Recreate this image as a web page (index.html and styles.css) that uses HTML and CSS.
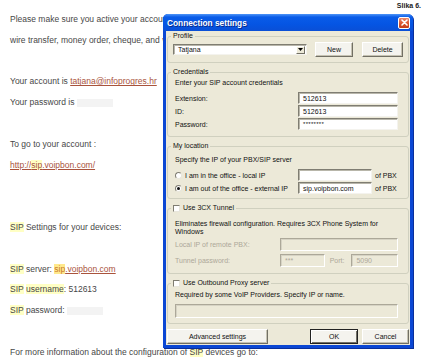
FILE: index.html
```html
<!DOCTYPE html>
<html lang="en">
<head>
    <meta charset="UTF-8">
    <meta name="viewport" content="width=device-width, initial-scale=1.0">
    <title>Slika 6 - Connection settings</title>
    <link rel="stylesheet" href="styles.css">
</head>
<body>
    <div class="page">
        <!-- Oznaka slike -->
        <div class="caption">Slika 6.</div>

        <!-- Tekst poruke u pozadini -->
        <div class="mail">
            <p class="line">Please make sure you active your account by making a payment via credit card,</p>
            <p class="line">wire transfer, money order, cheque, and various other payment methods.</p>
            <p class="line gap">Your account is <a class="link" href="#">tatjana@infoprogres.hr</a></p>
            <p class="line">Your password is <span class="blank"></span></p>
            <p class="line gap">To go to your account :</p>
            <p class="line"><a class="link" href="#">http://<span class="hl">sip</span>.voipbon.com/</a></p>
            <p class="line gap2"><span class="hl">SIP</span> Settings for your devices:</p>
            <p class="line gap"><span class="hl">SIP</span> server: <span class="hl-strong">sip</span><a class="link" href="#">.voipbon.com</a></p>
            <p class="line"><span class="hl">SIP</span> <span class="hl">username</span>: 512613</p>
            <p class="line"><span class="hl">SIP</span> password: <span class="blank"></span></p>
            <p class="line gap">For more information about the configuration of <span class="hl">SIP</span> devices go to:</p>
        </div>

        <!-- Prozor s postavkama veze -->
        <div class="window">
            <div class="titlebar">
                <span class="title">Connection settings</span>
                <span class="close">
                    <svg width="7" height="7" viewBox="0 0 7 7"><path d="M1 1 L6 6 M6 1 L1 6" stroke="#fff" stroke-width="1.6" stroke-linecap="round"/></svg>
                </span>
            </div>

            <div class="window-body">
                <fieldset class="group group-profile">
                    <legend>Profile</legend>
                    <div class="profile-row">
                        <div class="select">
                            <span>Tatjana</span>
                            <span class="drop">
                                <svg width="5" height="3" viewBox="0 0 5 3"><path d="M0 0 H5 L2.5 3 Z" fill="#000"/></svg>
                            </span>
                        </div>
                        <button class="btn btn-new" type="button">New</button>
                        <button class="btn btn-delete" type="button">Delete</button>
                    </div>
                </fieldset>

                <fieldset class="group group-cred">
                    <legend>Credentials</legend>
                    <p class="desc">Enter your SIP account credentials</p>
                    <div class="field-row first">
                        <span class="field-label">Extension:</span>
                        <span class="input w100">512613</span>
                    </div>
                    <div class="field-row">
                        <span class="field-label">ID:</span>
                        <span class="input w100">512613</span>
                    </div>
                    <div class="field-row">
                        <span class="field-label">Password:</span>
                        <span class="input w100 pwd">********</span>
                    </div>
                </fieldset>

                <fieldset class="group group-loc">
                    <legend>My location</legend>
                    <p class="desc">Specify the IP of your PBX/SIP server</p>
                    <div class="field-row first">
                        <span class="field-label"><span class="radio"></span>I am in the office - local IP</span>
                        <span class="input w74"></span>
                        <span class="suffix">of PBX</span>
                    </div>
                    <div class="field-row">
                        <span class="field-label"><span class="radio checked"></span>I am out of the office - external IP</span>
                        <span class="input w74">sip.voipbon.com</span>
                        <span class="suffix">of PBX</span>
                    </div>
                </fieldset>

                <fieldset class="group group-tunnel">
                    <legend><span class="check"></span>Use 3CX Tunnel</legend>
                    <p class="desc two">Eliminates firewall configuration. Requires 3CX Phone System for Windows</p>
                    <div class="field-row tall first">
                        <span class="field-label fixed disabled">Local IP of remote PBX:</span>
                        <span class="input off w119"></span>
                    </div>
                    <div class="field-row spaced">
                        <span class="field-label fixed disabled">Tunnel password:</span>
                        <span class="input off w45">***</span>
                        <span class="port disabled">Port:</span>
                        <span class="input off w47">5090</span>
                    </div>
                </fieldset>

                <fieldset class="group group-proxy">
                    <legend><span class="check"></span>Use Outbound Proxy server</legend>
                    <p class="desc">Required by some VoIP Providers. Specify IP or name.</p>
                    <span class="input off wide"></span>
                </fieldset>

                <div class="actions">
                    <button class="btn btn-adv" type="button">Advanced settings</button>
                    <button class="btn btn-ok" type="button">OK</button>
                    <button class="btn btn-cancel" type="button">Cancel</button>
                </div>
            </div>
        </div>
    </div>
</body>
</html>
```

FILE: styles.css
```css
/* Osnovno */
body {
    margin: 0;
    background: #fff;
    font-family: "Liberation Sans", Arial, sans-serif;
}

.page {
    position: relative;
    width: 425px;
    height: 364px;
    overflow: hidden;
}

.caption {
    position: absolute;
    top: 2px;
    right: 4px;
    font-size: 7px;
    font-weight: bold;
    color: #222;
}

/* Tekst poruke */
.mail {
    padding: 9px 0 0 10px;
    color: #474747;
    font-size: 8.5px;
}

.line {
    margin: 0;
    line-height: 20.8px;
    white-space: nowrap;
}

.line.gap {
    margin-top: 20.8px;
}

.line.gap2 {
    margin-top: 41.6px;
}

.link {
    color: #a9533c;
    text-decoration: underline;
}

.hl {
    background: #ffffc4;
}

.hl-strong {
    background: #ffe98c;
    color: #c87a2c;
}

.blank {
    display: inline-block;
    width: 36px;
    height: 8px;
    vertical-align: middle;
    background: #f3f3f3;
}

/* Prozor */
.window {
    position: absolute;
    left: 163px;
    top: 14px;
    width: 250px;
    box-sizing: border-box;
    background: #0b47d4;
    border-radius: 5px 5px 0 0;
    box-shadow: 1px 1px 0 #0a2f9a;
}

.titlebar {
    height: 17px;
    display: flex;
    align-items: center;
    justify-content: space-between;
    padding: 0 3px 0 4px;
    border-radius: 5px 5px 0 0;
    background: linear-gradient(to bottom, #4f95f7 0%, #0a5ce8 18%, #0555e3 60%, #0a4fd6 100%);
}

.title {
    color: #fff;
    font-size: 8.3px;
    font-weight: bold;
    text-shadow: 1px 1px 0 #0a2a8a;
}

.close {
    display: flex;
    align-items: center;
    justify-content: center;
    width: 10px;
    height: 10px;
    border: 1px solid #fff;
    border-radius: 2px;
    background: linear-gradient(to bottom, #ec8a6c, #d9502a 60%, #c23c18);
}

.window-body {
    margin: 0 3px 3px;
    padding: 1px 1px 1px;
    background: #ece9d8;
    color: #111;
    font-size: 7px;
}

/* Grupe */
.group {
    margin: 0 0 5px;
    padding: 2px 10px 5px 7px;
    border: 1px solid #d0d0bf;
    border-radius: 3px;
    min-width: 0;
}

.group legend {
    padding: 0 2px;
    margin-left: -4px;
    line-height: 8px;
    display: flex;
    align-items: center;
}

.group-profile {
    padding: 2px 5px 5px 5px;
}

.group-profile legend {
    margin-left: -2px;
}

.group-cred {
    padding-bottom: 6px;
}

.group-loc {
    padding-bottom: 4px;
}

.group-tunnel {
    padding-bottom: 6px;
}

.desc {
    margin: 0;
    line-height: 9px;
    white-space: nowrap;
}

.group-loc .desc {
    margin-top: 3px;
}

.desc.two {
    margin-top: 6px;
    line-height: 8px;
    white-space: normal;
}

.group-proxy .desc {
    margin-top: 2px;
    line-height: 8px;
}

.profile-row {
    display: flex;
    align-items: center;
}

.select {
    width: 134px;
    height: 11px;
    box-sizing: border-box;
    display: flex;
    align-items: center;
    justify-content: space-between;
    padding: 0 1px 0 4px;
    background: #fff;
    border: 1px solid;
    border-color: #7f7d72 #f4f3ee #f4f3ee #7f7d72;
    box-shadow: inset 1px 1px 0 #b8b6aa;
}

.drop {
    display: flex;
    align-items: center;
    justify-content: center;
    width: 9px;
    height: 8px;
    background: #ece9d8;
    border: 1px solid;
    border-color: #fff #716f64 #716f64 #fff;
    box-sizing: border-box;
}

/* Dugmad */
.btn {
    height: 15px;
    padding: 0;
    font-family: inherit;
    font-size: 7px;
    color: #111;
    background: #f4f3ee;
    border: 1px solid;
    border-color: #fff #716f64 #716f64 #fff;
    box-shadow: inset -1px -1px 0 #c5c2b2;
    box-sizing: border-box;
}

.btn-new {
    width: 38px;
    margin-left: 8px;
}

.btn-delete {
    width: 41px;
    margin-left: 9px;
}

.actions {
    display: flex;
    align-items: center;
}

.btn-adv {
    width: 101px;
}

.btn-ok {
    width: 48px;
    margin-left: auto;
    border: 1px solid #222;
    box-shadow: inset 1px 1px 0 #fff, inset -1px -1px 0 #716f64;
}

.btn-cancel {
    width: 47px;
    margin-left: 4px;
}

/* Polja */
.field-row {
    display: flex;
    align-items: center;
    height: 12px;
    margin-top: 1px;
    white-space: nowrap;
}

.field-row.first {
    margin-top: 5px;
}

.field-row.tall {
    height: 13px;
    margin-top: 2px;
}

.field-row.spaced {
    margin-top: 3px;
    height: 13px;
}

.field-label {
    flex: 1;
    display: flex;
    align-items: center;
}

.field-label.fixed {
    flex: 0 0 105px;
}

.disabled {
    color: #aca899;
}

.input {
    display: flex;
    align-items: center;
    height: 100%;
    box-sizing: border-box;
    padding-left: 4px;
    background: #fff;
    border: 1px solid;
    border-color: #7f7d72 #f4f3ee #f4f3ee #7f7d72;
    box-shadow: inset 1px 1px 0 #b8b6aa;
}

.input.off {
    background: #ece9d8;
    color: #aca899;
    border-color: #aca899 #fff #fff #aca899;
    box-shadow: inset 1px 1px 0 #d6d3c4;
}

.input.pwd {
    font-size: 6px;
    letter-spacing: 0.3px;
}

.w100 { width: 100px; }
.w74 { width: 74px; }
.w119 { width: 119px; }
.w45 { width: 45px; }
.w47 { width: 47px; }

.input.wide {
    height: 14px;
    margin-top: 5px;
}

.suffix {
    width: 23px;
    margin-left: 3px;
}

.port {
    width: 22px;
    margin-left: 5px;
}

.radio {
    width: 7px;
    height: 7px;
    margin-right: 3px;
    box-sizing: border-box;
    border-radius: 50%;
    background: #fff;
    border: 1px solid;
    border-color: #7f7d72 #e8e6dc #e8e6dc #7f7d72;
    display: flex;
    align-items: center;
    justify-content: center;
}

.radio.checked::after {
    content: "";
    width: 3px;
    height: 3px;
    border-radius: 50%;
    background: #111;
}

.check {
    width: 7px;
    height: 7px;
    margin-right: 3px;
    box-sizing: border-box;
    background: #fff;
    border: 1px solid;
    border-color: #7f7d72 #e8e6dc #e8e6dc #7f7d72;
}
```
